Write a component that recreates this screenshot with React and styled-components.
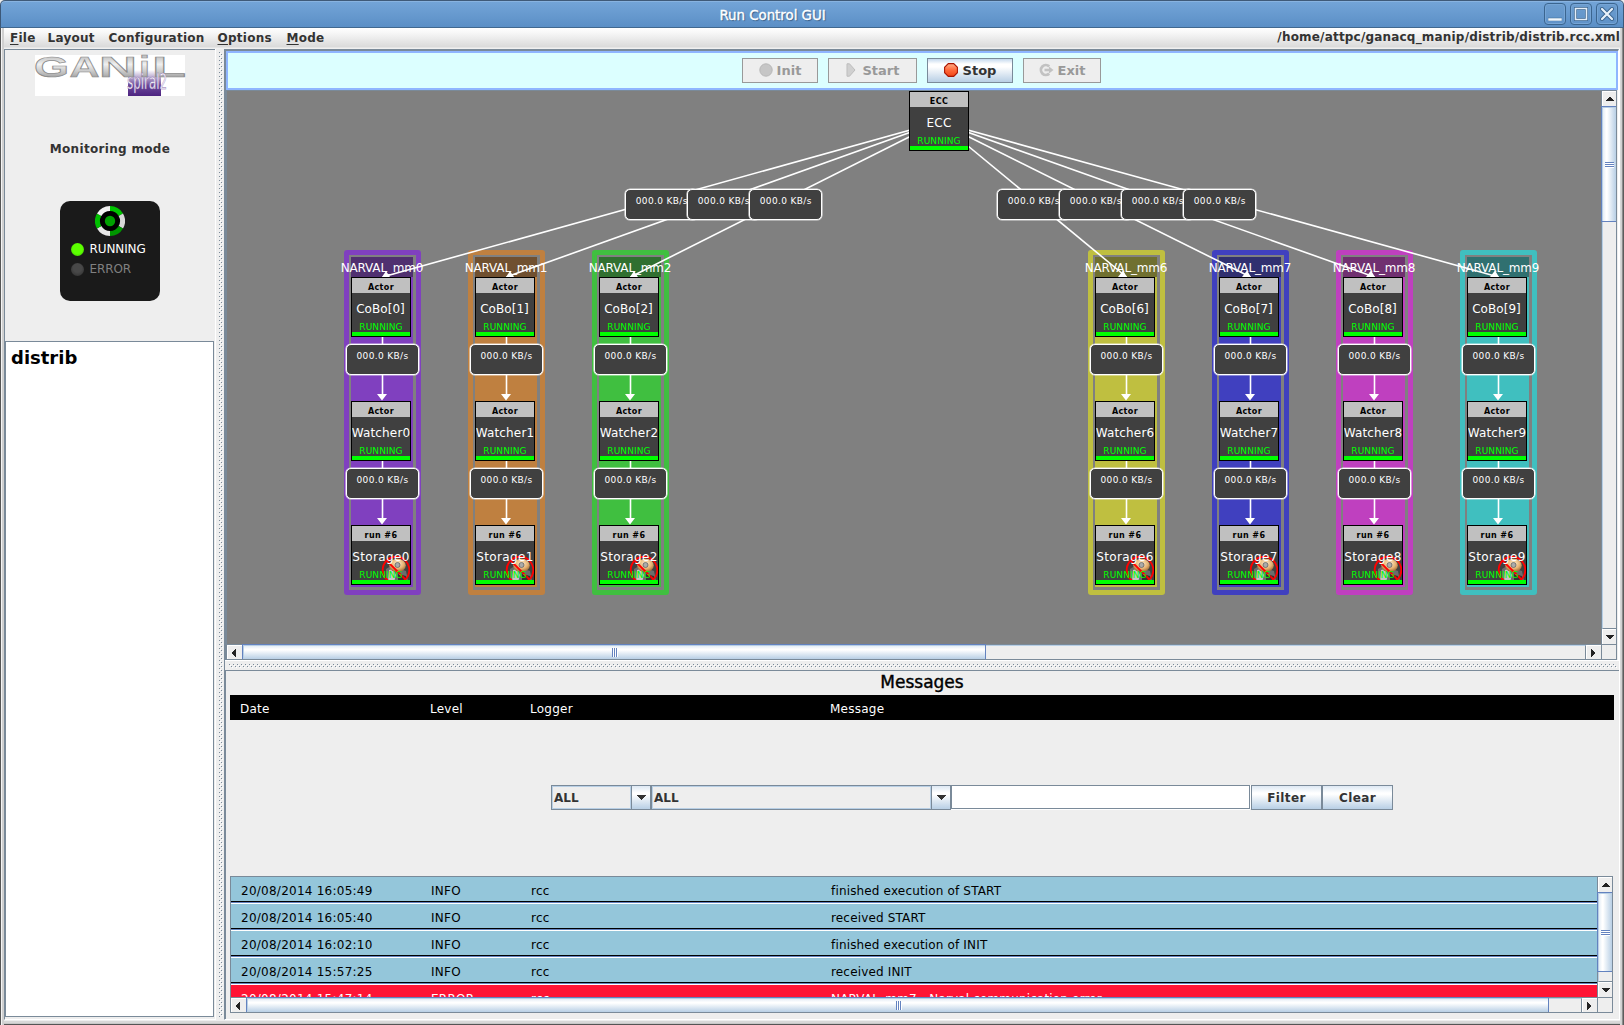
import React from "react";
import styled, { createGlobalStyle, css } from "styled-components";

const steel = "#7a8a99";
const metal = "linear-gradient(#dde8f3 0%, #ffffff 30%, #ffffff 36%, #b8cfe5 100%)";
const metalSide = "linear-gradient(90deg, #dde8f3 0%, #ffffff 30%, #ffffff 36%, #b8cfe5 100%)";

const GlobalStyle = createGlobalStyle`
  body { margin: 0; overflow: hidden; font-family: "DejaVu Sans", sans-serif; }
  * { box-sizing: border-box; }
`;

/* ---------- window frame ---------- */

const Window = styled.div`
  width: 1624px;
  height: 1025px;
  display: flex;
  flex-direction: column;
  background: #eeeeee;
  font-size: 12px;
  color: #333333;
  overflow: hidden;
`;

const TitleBar = styled.header`
  height: 28px;
  flex: none;
  display: grid;
  grid-template-columns: 1fr auto 1fr;
  align-items: center;
  border-top: 1px solid #3f5a78;
  border-bottom: 1px solid #41688f;
  border-left: 1px solid #3c5878;
  border-right: 1px solid #3c5878;
  border-radius: 5px 5px 0 0;
  background: linear-gradient(#74a5d8, #5b8fc6);
  box-shadow: inset 0 1px 0 #88b3e0;
`;

const WindowTitle = styled.div`
  grid-column: 2;
  padding: 2px 79px 0 0;
  font-size: 13.33px;
  color: #ffffff;
  -webkit-text-stroke: 0.35px #ffffff;
  text-shadow: 1px 1px 1px #355b84;
`;

const WindowButtons = styled.div`
  display: flex;
  justify-content: flex-end;
  gap: 4px;
  padding-right: 5px;
`;

const WindowButton = styled.button`
  width: 22px;
  height: 22px;
  padding: 0;
  display: grid;
  place-items: center;
  border: 1px solid #3b658f;
  border-radius: 4px;
  background: linear-gradient(#6c9dcf, #5f92c8);
  box-shadow: inset 0 0 0 1px #76a5d5;
`;

const Frame = styled.div`
  flex: 1;
  min-height: 0;
  display: flex;
  flex-direction: column;
  padding: 0 4px 5px 4px;
  background:
    linear-gradient(90deg, #555 0 1px, #f4f4f4 1px 2px, #d0d0d0 2px 4px, transparent 4px) 0 0 / 4px 100% no-repeat,
    linear-gradient(90deg, #d8d8d8 0 1px, #d0d0d0 1px 2px, #8c8c8c 2px 3px, #5c5c5c 3px 4px) 100% 0 / 4px 100% no-repeat,
    linear-gradient(#d8d8d8 0 2px, #c8c8c8 2px 3px, #555 3px 4px) 0 100% / 100% 4px no-repeat,
    #eeeeee;
`;

const MenuBar = styled.nav`
  height: 21px;
  flex: none;
  display: flex;
  align-items: flex-start;
  background: linear-gradient(#ffffff 0, #f6f6f6 25%, #dadada 19px, #f0f0f0 20px);
  padding-left: 6px;
  font-weight: bold;
  letter-spacing: 0.26px;
`;

const MenuItem = styled.div`
  width: ${(p) => p.$w}px;
  line-height: 21px;
  white-space: nowrap;
  u { text-underline-offset: 2px; }
`;

const FilePath = styled.div`
  margin-left: auto;
  line-height: 18px;
  letter-spacing: 0.19px;
  white-space: nowrap;
`;

const Body = styled.main`
  flex: 1;
  min-height: 0;
  display: flex;
`;

/* ---------- left pane ---------- */

const SidePane = styled.aside`
  width: 211px;
  flex: none;
  display: flex;
  flex-direction: column;
  border-top: 1px solid ${steel};
  border-left: 1px solid ${steel};
  border-bottom: 1px solid #ffffff;
  padding-right: 1px;
`;

const StatusArea = styled.section`
  height: 291px;
  flex: none;
  display: flex;
  flex-direction: column;
  align-items: center;
  padding-top: 5px;
`;

const ModeLabel = styled.div`
  margin-top: 45px;
  height: 15px;
  line-height: 16px;
  padding-left: 1px;
  font-weight: bold;
  letter-spacing: 0.32px;
`;

const StatusBox = styled.div`
  margin-top: 45px;
  width: 100px;
  height: 100px;
  border-radius: 10px;
  background: #1a1a1a;
  display: flex;
  flex-direction: column;
  align-items: center;
  padding-top: 5px;
`;

const StatusLine = styled.div`
  width: 100%;
  height: 20px;
  display: flex;
  align-items: center;
  padding-left: 11px;
  gap: 6px;
  margin-top: ${(p) => p.$top || 0}px;
  letter-spacing: -0.1px;
  color: ${(p) => (p.$on ? "#ffffff" : "#808080")};
`;

const Lamp = styled.span`
  width: 13px;
  height: 13px;
  border-radius: 50%;
  background: ${(p) =>
    p.$on
      ? "radial-gradient(circle at 50% 45%, #5cff00 0 50%, #3fcc00 85%)"
      : "radial-gradient(circle at 50% 40%, #484848 0 40%, #303030 90%)"};
`;

const Tree = styled.div`
  flex: 1;
  margin: 0 0 2px 0;
  border: 1px solid ${steel};
  background: #ffffff;
  color: #000000;
  font-size: 18px;
  font-weight: bold;
  line-height: 22px;
  padding: 5px;
`;

const bumps = (dark, x, y) => css`
  background:
    conic-gradient(at 1px 1px, transparent 75%, ${dark} 0) ${x}px ${y}px / 4px 4px,
    conic-gradient(at 1px 1px, transparent 75%, ${dark} 0) ${x + 2}px ${y + 2}px / 4px 4px,
    conic-gradient(at 1px 1px, transparent 75%, #fff 0) ${x + 1}px ${y + 1}px / 4px 4px,
    conic-gradient(at 1px 1px, transparent 75%, #fff 0) ${x + 3}px ${y + 3}px / 4px 4px;
`;

const VDivider = styled.div`
  width: 9px;
  flex: none;
  padding: 3px 2px 0 4px;
  border-left: 1px solid #ffffff;
  &::before {
    content: "";
    display: block;
    width: 4px;
    height: 965px;
    margin-left: -1px;
    ${bumps(steel, 0, 0)}
  }
`;

const HDivider = styled.div`
  height: 10px;
  flex: none;
  border-top: 1px solid #ffffff;
  padding: 3px 2px 0 4px;
  &::before {
    content: "";
    display: block;
    height: 4px;
    ${bumps(steel, 0, 0)}
  }
`;

/* ---------- right pane ---------- */

const MainPane = styled.section`
  flex: 1;
  min-width: 0;
  display: flex;
  flex-direction: column;
  border-left: 1px solid ${steel};
  border-right: 1px solid #ffffff;
  border-bottom: 1px solid #ffffff;
`;

const GraphPane = styled.div`
  height: 611px;
  flex: none;
  display: flex;
  flex-direction: column;
  border-top: 2px solid ${steel};
  border-left: 1px solid ${steel};
  border-right: 1px solid #ffffff;
`;

const Toolbar = styled.div`
  height: 39px;
  flex: none;
  display: flex;
  justify-content: center;
  align-items: center;
  gap: 10px;
  padding: 0 1px 1px 0;
  border: 2px solid #8fb5ff;
  background: #dcffff;
`;

const ToolButton = styled.button`
  width: ${(p) => p.$w}px;
  height: 25px;
  display: flex;
  align-items: center;
  justify-content: center;
  gap: ${(p) => p.$gap || 5}px;
  padding: 0;
  border: 1px solid ${(p) => (p.$on ? steel : "#999999")};
  background: ${(p) => (p.$on ? "linear-gradient(#c5d9ee 0, #ffffff 22%, #ffffff 34%, #b8cfe5 100%)" : "#eeeeee")};
  color: ${(p) => (p.$on ? "#333333" : "#999999")};
  font: bold 13px "DejaVu Sans", sans-serif;
`;

const ScrollPane = styled.div`
  flex: 1;
  min-height: 0;
  margin-right: 1px;
  display: grid;
  grid-template-columns: minmax(0, 1fr) 15px;
  grid-template-rows: minmax(0, 1fr) 15px;
  border: 1px solid ${steel};
`;

const Canvas = styled.div`
  position: relative;
  overflow: hidden;
  background: #808080;
`;

const Edges = styled.svg`
  position: absolute;
  left: -227px;
  top: -91px;
`;

/* ---------- scroll bars ---------- */

const VBar = styled.div`
  display: flex;
  flex-direction: column;
  border-left: 1px solid ${steel};
`;

const HBar = styled.div`
  display: flex;
  border-top: 1px solid ${steel};
`;

const ArrowButton = styled.div`
  flex: none;
  display: grid;
  place-items: center;
  border-top: 1px solid #ffffff;
  border-left: 1px solid #ffffff;
  ${(p) => (p.$v ? css`height: 15px;` : css`width: 15px; padding-right: 2px;`)}
`;

const Thumb = styled.div`
  flex: none;
  display: grid;
  place-items: center;
  border: 1px solid #6382bf;
  ${(p) =>
    p.$v
      ? css`height: ${p.$len}px; padding-top: 2px; border-right: 0; background: ${metalSide}; margin-left: -1px; box-shadow: inset 1px 1px 0 #b8cfe5;`
      : css`width: ${p.$len}px; padding-left: 2px; border-bottom: 0; background: ${metal}; margin-top: -1px; box-shadow: inset 1px 1px 0 #b8cfe5;`}
`;

const Grip = styled.span`
  ${(p) =>
    p.$v
      ? css`width: 9px; height: 6px; background: repeating-linear-gradient(#6382bf 0 1px, #ffffff 1px 2px);`
      : css`width: 6px; height: 9px; background: repeating-linear-gradient(90deg, #6382bf 0 1px, #ffffff 1px 2px);`}
`;

const Track = styled.div`
  flex: 1;
  ${(p) =>
    p.$v
      ? css`border-left: 1px solid #b8cfe5; border-bottom: 1px solid ${steel};`
      : css`border-top: 1px solid #b8cfe5; border-right: 1px solid ${steel};`}
`;

const Corner = styled.div`
  border-left: 1px solid ${steel};
  border-top: 1px solid ${steel};
`;

/* ---------- graph nodes ---------- */

const Group = styled.div`
  position: absolute;
  left: ${(p) => p.$x - 227}px;
  top: 159px;
  width: 77px;
  height: 345px;
  border: 5px solid ${(p) => p.$c};
  border-radius: 3px;
  padding: 2px 3px 3px 2px;
`;

const GroupFill = styled.div`
  height: 330px;
  background: ${(p) => p.$c};
`;

const GroupHead = styled.div`
  height: 20px;
  display: flex;
  justify-content: center;
  line-height: 22px;
  color: #ffffff;
  white-space: nowrap;
  letter-spacing: -0.16px;
  background: ${(p) => p.$c};
`;

const NodeBox = styled.div`
  position: absolute;
  left: ${(p) => p.$x - 227}px;
  top: ${(p) => p.$y - 91}px;
  width: 60px;
  height: 60px;
  display: flex;
  flex-direction: column;
  align-items: center;
  overflow: hidden;
  border: 1px solid #000000;
  background: #404040;
  color: #ffffff;
  white-space: nowrap;
`;

const NodeHead = styled.div`
  align-self: stretch;
  height: 15px;
  flex: none;
  text-align: center;
  background: #c0c0c0;
  color: #000000;
  font-size: 8px;
  font-weight: bold;
  line-height: 19px;
  letter-spacing: 0.4px;
`;

const NodeName = styled.div`
  height: 18px;
  flex: none;
  margin-top: 7px;
  padding-right: ${(p) => p.$shift || 0}px;
  line-height: 18px;
  letter-spacing: ${(p) => p.$ls || 0}px;
  z-index: 1;
`;

const NodeState = styled.div`
  height: 11px;
  flex: none;
  margin-top: 3px;
  line-height: 12px;
  font-size: 9px;
  letter-spacing: 0.1px;
  color: #00ff00;
  z-index: 1;
`;

const NodeBar = styled.div`
  align-self: stretch;
  height: 4px;
  flex: none;
  background: #00ff00;
  z-index: 1;
`;

const NoDisk = styled.svg`
  position: absolute;
  right: -1px;
  bottom: -1px;
`;

const Rate = styled.div`
  position: absolute;
  left: ${(p) => p.$x - 227}px;
  top: ${(p) => p.$y - 91}px;
  width: 73px;
  height: 31px;
  border: 1px solid #ffffff;
  border-radius: 5px;
  background: #404040;
  box-shadow: 0 0 0 0.6px rgba(255, 255, 255, 0.75);
  color: #ffffff;
  font-size: 9px;
  letter-spacing: 0.35px;
  line-height: 22px;
  text-align: center;
  white-space: nowrap;
`;

/* ---------- messages ---------- */

const MessagePane = styled.div`
  flex: 1;
  min-height: 0;
  display: flex;
  flex-direction: column;
  border-top: 1px solid ${steel};
  border-left: 1px solid ${steel};
  padding: 0 5px 6px 4px;
`;

const MessageTitle = styled.h1`
  margin: 0;
  height: 24px;
  line-height: 23px;
  font-size: 17px;
  font-weight: normal;
  color: #000000;
  text-align: center;
  -webkit-text-stroke: 0.4px #000000;
`;

const columns = css`
  display: grid;
  grid-template-columns: 190px 100px 300px 1fr;
  letter-spacing: 0.25px;
`;

const TableHead = styled.div`
  ${columns}
  height: 25px;
  flex: none;
  line-height: 29px;
  padding-left: 10px;
  background: #000000;
  color: #ffffff;
`;

const FilterRow = styled.div`
  height: 156px;
  flex: none;
  display: flex;
  align-items: flex-start;
  padding: 65px 0 0 321px;
`;

const Combo = styled.div`
  width: ${(p) => p.$w}px;
  height: 25px;
  display: flex;
  border: 1px solid ${steel};
`;

const ComboText = styled.div`
  flex: 1;
  border: 1px solid #b8cfe5;
  padding-left: 1px;
  line-height: 22px;
  font-weight: bold;
`;

const ComboArrow = styled.div`
  width: 19px;
  display: grid;
  place-items: center;
  border-left: 1px solid ${steel};
  background: ${metal};
`;

const FilterInput = styled.input`
  width: 299px;
  height: 24px;
  margin: 0 1px 0 0;
  padding: 0 3px;
  border: 1px solid ${steel};
  border-radius: 0;
  box-shadow: 0 1px 0 #ffffff, 1px 0 0 #ffffff;
  background: #ffffff;
  outline: none;
`;

const PlainButton = styled.button`
  width: 71px;
  height: 25px;
  padding: 0;
  border: 1px solid ${steel};
  background: ${metal};
  color: #333333;
  font: bold 12px "DejaVu Sans", sans-serif;
  letter-spacing: 0.4px;
`;

const Rows = styled.div`
  overflow: hidden;
`;

const Row = styled.div`
  ${columns}
  height: 27px;
  line-height: 28px;
  padding-left: 10px;
  white-space: nowrap;
  background: ${(p) => (p.$error ? "#ff1435" : "#94c6da")};
  color: ${(p) => (p.$error ? "#ffffff" : "#000000")};
  border-bottom: 1px solid #ffffff;
  box-shadow: inset 0 -1px 0 #6382bf, inset 0 -2px 0 #000000;
  span:last-child { letter-spacing: 0.16px; }
`;

/* ---------- drawings ---------- */

const Arrow = ({ dir }) => {
  const d = {
    up: "M3 0h2v1h1v1h1v1h1v1H0V3h1V2h1V1h1z",
    down: "M0 0h8v1H7v1H6v1H5v1H3V3H2V2H1V1H0z",
    left: "M3 0h1v8H3V7H2V6H1V5H0V3h1V2h1V1h1z",
    right: "M0 0h1v1h1v1h1v1h1v2H3v1H2v1H1v1H0z",
  }[dir];
  const side = dir === "left" || dir === "right";
  return (
    <svg width={side ? 4 : 8} height={side ? 8 : 4} shapeRendering="crispEdges">
      <path d={d} fill="#222" />
    </svg>
  );
};

const ComboTriangle = () => (
  <svg width="10" height="5" shapeRendering="crispEdges">
    <path d="M0 0h10L5 5z" fill="#333" />
  </svg>
);

const LogoSvg = styled.svg`
  flex: none;
  overflow: visible;
`;

const Logo = () => (
  <LogoSvg width="150" height="41">
    <defs>
      <linearGradient id="chrome" x1="0" y1="0" x2="0" y2="1">
        <stop offset="0" stopColor="#9a9a9a" />
        <stop offset="0.45" stopColor="#f0f0f0" />
        <stop offset="0.75" stopColor="#b8b8b8" />
        <stop offset="1" stopColor="#7a7a7a" />
      </linearGradient>
      <linearGradient id="violet" x1="0" y1="0" x2="0" y2="1">
        <stop offset="0" stopColor="#ffffff" />
        <stop offset="0.6" stopColor="#6a4798" />
        <stop offset="1" stopColor="#4d2380" />
      </linearGradient>
    </defs>
    <rect width="150" height="41" fill="#fff" />
    <rect x="93" y="15" width="33" height="26" fill="url(#violet)" />
    <g fill="url(#chrome)" stroke="#8c8c8c" strokeWidth="0.7" fontFamily="Liberation Sans, sans-serif" fontWeight="bold" fontSize="30">
      <text x="-1" y="21.5" textLength="35" lengthAdjust="spacingAndGlyphs">G</text>
      <text x="34.5" y="21.5" textLength="30" lengthAdjust="spacingAndGlyphs">A</text>
      <text x="64" y="21.5" textLength="38" lengthAdjust="spacingAndGlyphs">N</text>
      <text x="104" y="21.5" textLength="11" lengthAdjust="spacingAndGlyphs">i</text>
      <text x="117" y="21.5" textLength="34" lengthAdjust="spacingAndGlyphs">L</text>
    </g>
    <text
      x="92" y="33.5" textLength="40" lengthAdjust="spacingAndGlyphs"
      fill="#fff" stroke="#8a6cae" strokeWidth="0.5"
      fontFamily="DejaVu Sans, sans-serif" fontSize="21"
    >spiral2</text>
  </LogoSvg>
);

const arc = (a0, a1) => {
  const p = (r, a) => {
    const t = ((a - 90) * Math.PI) / 180;
    return `${(15 + r * Math.cos(t)).toFixed(2)} ${(15 + r * Math.sin(t)).toFixed(2)}`;
  };
  return `M${p(15, a0)}A15 15 0 0 1 ${p(15, a1)}L${p(10, a1)}A10 10 0 0 0 ${p(10, a0)}z`;
};

const WheelSvg = styled.svg`
  flex: none;
`;

const Wheel = () => (
  <WheelSvg width="30" height="30">
    <circle cx="15" cy="15" r="12" fill="#000" />
    <path d={arc(0, 60)} fill="#00c400" />
    <path d={arc(60, 120)} fill="#d8d8d8" />
    <path d={arc(120, 180)} fill="#009600" />
    <path d={arc(180, 240)} fill="#e6e6e6" />
    <path d={arc(240, 300)} fill="#00c000" />
    <path d={arc(300, 360)} fill="#f2f2f2" />
    <circle cx="15" cy="15" r="5.2" fill="#00a000" />
  </WheelSvg>
);

const Disc = () => (
  <svg width="14" height="14"><circle cx="7" cy="7" r="6.2" fill="#c6c6c6" stroke="#b8b8b8" /></svg>
);
const Play = () => (
  <svg width="10" height="14"><path d="M1 .8h2.5L9 7l-5.5 6.2H1z" fill="#d0d0d0" stroke="#bdbdbd" /></svg>
);
const StopSign = () => (
  <svg width="14" height="14">
    <defs>
      <linearGradient id="stop" x1="0" y1="0" x2="0" y2="1">
        <stop offset="0" stopColor="#ffb08a" />
        <stop offset="0.5" stopColor="#ff6a3c" />
        <stop offset="1" stopColor="#f04416" />
      </linearGradient>
    </defs>
    <path d="M4.3.6h5.4l3.7 3.7v5.4l-3.7 3.7H4.3L.6 9.7V4.3z" fill="url(#stop)" stroke="#a81400" strokeWidth="1.1" />
  </svg>
);
const ExitIcon = () => (
  <svg width="15" height="14" fill="none" stroke="#c2c2c2" strokeWidth="2.8">
    <path d="M10.2 3.4A4.9 4.9 0 1 0 10.2 10.6" />
    <path d="M5.5 7H11" strokeWidth="2.6" />
    <path d="M10 3.6L14.5 7L10 10.4z" fill="#c2c2c2" stroke="none" />
  </svg>
);

const DiskIcon = () => (
  <NoDisk width="30" height="30" viewBox="0 0 30 30">
    <defs>
      <radialGradient id="ball" cx="0.5" cy="0.35" r="0.65">
        <stop offset="0" stopColor="#fff0d0" />
        <stop offset="0.6" stopColor="#e5b070" />
        <stop offset="1" stopColor="#94602c" />
      </radialGradient>
    </defs>
    <path d="M5 14l5-3 15 5 2 10H5z" fill="#6c6c6c" />
    <path d="M8 15l4-1 3 6-2 7-6-1z" fill="#c4c4c4" />
    <path d="M17 19l8 2 0 5-8-1z" fill="#333" />
    <ellipse cx="16.5" cy="10.5" rx="8.3" ry="6.8" fill="url(#ball)" />
    <circle cx="16.5" cy="10" r="2.5" fill="#aaa" stroke="#666" strokeWidth="0.8" />
    <g fill="none" stroke="#ff0000" strokeWidth="1.9">
      <circle cx="15" cy="15" r="13.3" />
      <path d="M5.6 5.6L24.4 24.4" />
    </g>
  </NoDisk>
);

/* ---------- data ---------- */

const groups = [
  { n: 0, x: 344, c: "#8040bf", d: "#503070" },
  { n: 1, x: 468, c: "#bf8040", d: "#705030" },
  { n: 2, x: 592, c: "#40bf40", d: "#307030" },
  { n: 6, x: 1088, c: "#bfbf40", d: "#707030" },
  { n: 7, x: 1212, c: "#4040bf", d: "#303070" },
  { n: 8, x: 1336, c: "#bf40bf", d: "#703070" },
  { n: 9, x: 1460, c: "#40bfbf", d: "#307070" },
];

const messages = [
  ["20/08/2014 16:05:49", "INFO", "rcc", "finished execution of START"],
  ["20/08/2014 16:05:40", "INFO", "rcc", "received START"],
  ["20/08/2014 16:02:10", "INFO", "rcc", "finished execution of INIT"],
  ["20/08/2014 15:57:25", "INFO", "rcc", "received INIT"],
  ["20/08/2014 15:47:14", "ERROR", "rcc", "NARVAL_mm7 - Narval communication error"],
];

const Node = ({ x, y, head, name, ls, shift, disk }) => (
  <NodeBox $x={x} $y={y}>
    <NodeHead>{head}</NodeHead>
    {disk && <DiskIcon />}
    <NodeName $ls={ls} $shift={shift}>{name}</NodeName>
    <NodeState>RUNNING</NodeState>
    <NodeBar />
  </NodeBox>
);

const Graph = () => (
  <Canvas>
    {groups.map((g) => (
      <Group key={g.n} $x={g.x} $c={g.c}>
        <GroupFill $c={g.c}>
          <GroupHead $c={g.d}>NARVAL_mm{g.n}</GroupHead>
        </GroupFill>
      </Group>
    ))}
    <Edges width="1624" height="660" stroke="#fff" strokeWidth="1.6" fill="#fff">
      {groups.map((g) => {
        const x = g.x + 38.5;
        const head = x < 939
          ? `M${x - 0.5} 277L${x + 3.5} 271L${x + 7.5} 277z`
          : `M${x - 8.5} 277L${x - 3.5} 270.5L${x + 0.5} 277z`;
        return (
          <g key={g.n}>
            <line x1="939" y1="122" x2={x} y2="277" />
            <path d={head} stroke="none" />
            <line x1={x} y1="337" x2={x} y2="394" />
            <line x1={x} y1="461" x2={x} y2="518" />
            <path d={`M${x - 5.5} 394h10l-5 6.5zM${x - 5.5} 518h10l-5 6.5z`} stroke="none" />
          </g>
        );
      })}
    </Edges>
    <Node x={909} y={91} head="ECC" name="ECC" ls={0.2} />
    {groups.map((g) => (
      <React.Fragment key={g.n}>
        <Rate $x={(939 + g.x + 38.5) / 2 - 35.5} $y={189}>000.0 KB/s</Rate>
        <Rate $x={g.x + 2} $y={344}>000.0 KB/s</Rate>
        <Rate $x={g.x + 2} $y={468}>000.0 KB/s</Rate>
        <Node x={g.x + 7} y={277} head="Actor" name={`CoBo[${g.n}]`} ls={0.05} shift={1} />
        <Node x={g.x + 7} y={401} head="Actor" name={`Watcher${g.n}`} ls={0.15} />
        <Node x={g.x + 7} y={525} head="run #6" name={`Storage${g.n}`} ls={0.35} disk />
      </React.Fragment>
    ))}
  </Canvas>
);

export default function App() {
  return (
    <Window>
      <GlobalStyle />
      <TitleBar>
        <WindowTitle>Run Control GUI</WindowTitle>
        <WindowButtons>
          <WindowButton>
            <svg width="14" height="14"><path d="M0 11h14v3H0z" fill="#f0f6fc" stroke="#3b658f" strokeWidth="0.5" /></svg>
          </WindowButton>
          <WindowButton>
            <svg width="14" height="14" fill="none"><path d="M1.5 1.5h11v11h-11z" stroke="#3b658f" strokeWidth="3" /><path d="M1.5 1.5h11v11h-11z" stroke="#e4eef8" strokeWidth="1.6" /></svg>
          </WindowButton>
          <WindowButton>
            <svg width="14" height="14" fill="none" strokeLinecap="round"><path d="M2 2l10 10M12 2L2 12" stroke="#3b658f" strokeWidth="4" /><path d="M2 2l10 10M12 2L2 12" stroke="#e8f1fa" strokeWidth="2.2" /></svg>
          </WindowButton>
        </WindowButtons>
      </TitleBar>
      <Frame>
        <MenuBar>
          <MenuItem $w={37.5}><u>F</u>ile</MenuItem>
          <MenuItem $w={61}>Layout</MenuItem>
          <MenuItem $w={109}>Configuration</MenuItem>
          <MenuItem $w={69}><u>O</u>ptions</MenuItem>
          <MenuItem $w={60}><u>M</u>ode</MenuItem>
          <FilePath>/home/attpc/ganacq_manip/distrib/distrib.rcc.xml</FilePath>
        </MenuBar>
        <Body>
          <SidePane>
            <StatusArea>
              <Logo />
              <ModeLabel>Monitoring mode</ModeLabel>
              <StatusBox>
                <Wheel />
                <StatusLine $on $top={3}><Lamp $on />RUNNING</StatusLine>
                <StatusLine><Lamp />ERROR</StatusLine>
              </StatusBox>
            </StatusArea>
            <Tree>distrib</Tree>
          </SidePane>
          <VDivider />
          <MainPane>
            <GraphPane>
              <Toolbar>
                <ToolButton $w={76} $gap={4} disabled><Disc />Init</ToolButton>
                <ToolButton $w={89} $gap={7} disabled><Play />Start</ToolButton>
                <ToolButton $w={86} $on><StopSign />Stop</ToolButton>
                <ToolButton $w={78} $gap={4} disabled><ExitIcon />Exit</ToolButton>
              </Toolbar>
              <ScrollPane>
                <Graph />
                <VBar>
                  <ArrowButton $v><Arrow dir="up" /></ArrowButton>
                  <Thumb $v $len={116}><Grip $v /></Thumb>
                  <Track $v />
                  <ArrowButton $v><Arrow dir="down" /></ArrowButton>
                </VBar>
                <HBar>
                  <ArrowButton><Arrow dir="left" /></ArrowButton>
                  <Thumb $len={744}><Grip /></Thumb>
                  <Track />
                  <ArrowButton><Arrow dir="right" /></ArrowButton>
                </HBar>
                <Corner />
              </ScrollPane>
            </GraphPane>
            <HDivider />
            <MessagePane>
              <MessageTitle>Messages</MessageTitle>
              <TableHead>
                <span>Date</span><span>Level</span><span>Logger</span><span>Message</span>
              </TableHead>
              <FilterRow>
                <Combo $w={100}><ComboText>ALL</ComboText><ComboArrow><ComboTriangle /></ComboArrow></Combo>
                <Combo $w={300}><ComboText>ALL</ComboText><ComboArrow><ComboTriangle /></ComboArrow></Combo>
                <FilterInput />
                <PlainButton>Filter</PlainButton>
                <PlainButton>Clear</PlainButton>
              </FilterRow>
              <ScrollPane>
                <Rows>
                  {messages.map((m) => (
                    <Row key={m[0]} $error={m[1] === "ERROR"}>
                      {m.map((t) => <span key={t}>{t}</span>)}
                    </Row>
                  ))}
                </Rows>
                <VBar>
                  <ArrowButton $v><Arrow dir="up" /></ArrowButton>
                  <Thumb $v $len={80}><Grip $v /></Thumb>
                  <Track $v />
                  <ArrowButton $v><Arrow dir="down" /></ArrowButton>
                </VBar>
                <HBar>
                  <ArrowButton><Arrow dir="left" /></ArrowButton>
                  <Thumb $len={1303}><Grip /></Thumb>
                  <Track />
                  <ArrowButton><Arrow dir="right" /></ArrowButton>
                </HBar>
                <Corner />
              </ScrollPane>
            </MessagePane>
          </MainPane>
        </Body>
      </Frame>
    </Window>
  );
}
